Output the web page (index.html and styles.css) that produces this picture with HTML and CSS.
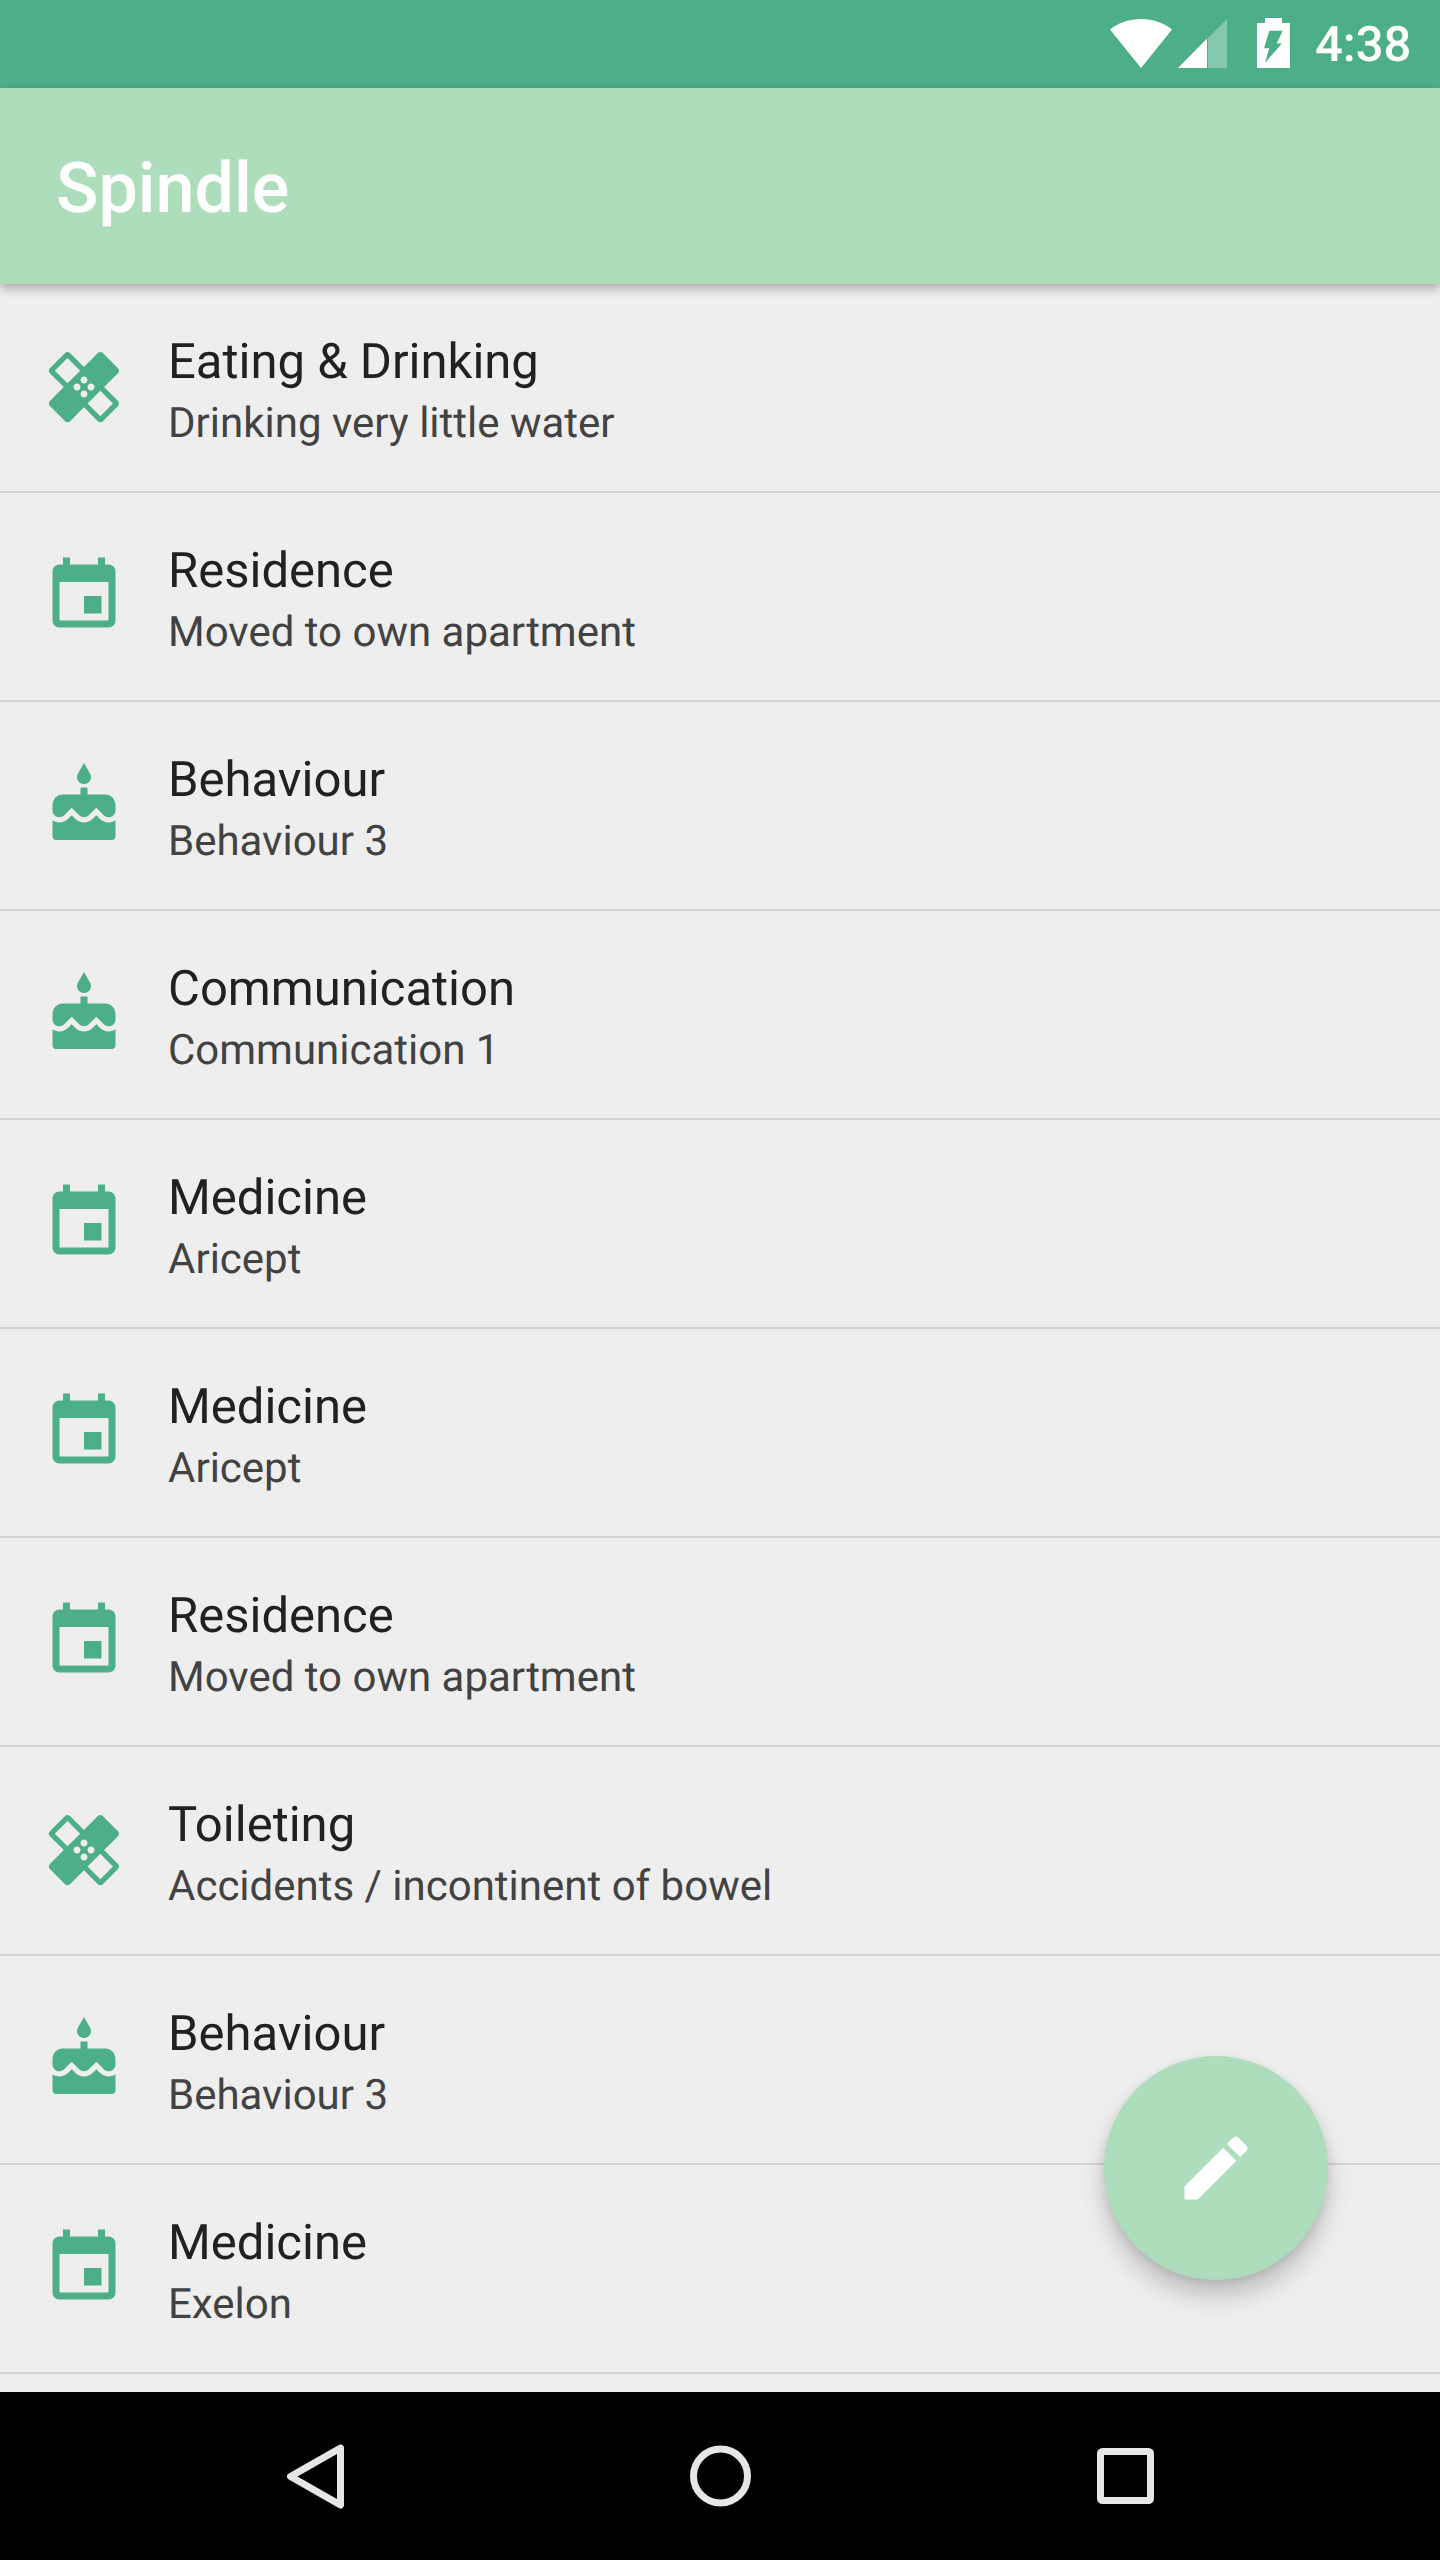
FILE: index.html
```html
<!DOCTYPE html>
<html lang="en">
<head>
<meta charset="utf-8">
<title>Spindle</title>
<link rel="stylesheet" href="styles.css">
</head>
<body>
<svg class="defs" width="0" height="0" aria-hidden="true">
  <symbol id="i-healing" viewBox="0 0 24 24"><path d="M17.73 12.02l3.98-3.98c.39-.39.39-1.02 0-1.41l-4.34-4.34c-.39-.39-1.02-.39-1.41 0l-3.98 3.98L8 2.29C7.8 2.1 7.55 2 7.29 2c-.25 0-.51.1-.7.29L2.25 6.63c-.39.39-.39 1.02 0 1.41l3.98 3.98L2.25 16c-.39.39-.39 1.02 0 1.41l4.34 4.34c.39.39 1.02.39 1.41 0l3.98-3.98 3.98 3.98c.2.2.45.29.71.29.26 0 .51-.1.71-.29l4.34-4.34c.39-.39.39-1.02 0-1.41l-3.99-3.98zM12 9c.55 0 1 .45 1 1s-.45 1-1 1-1-.45-1-1 .45-1 1-1zm-4.71 1.96L3.66 7.34l3.63-3.63 3.62 3.62-3.62 3.63zM10 13c-.55 0-1-.45-1-1s.45-1 1-1 1 .45 1 1-.45 1-1 1zm2 2c-.55 0-1-.45-1-1s.45-1 1-1 1 .45 1 1-.45 1-1 1zm2-4c.55 0 1 .45 1 1s-.45 1-1 1-1-.45-1-1 .45-1 1-1zm2.66 9.34l-3.63-3.62 3.63-3.63 3.62 3.62-3.62 3.63z"/></symbol>
  <symbol id="i-event" viewBox="0 0 24 24"><path d="M17 12h-5v5h5v-5zM16 1v2H8V1H6v2H5c-1.11 0-1.99.9-1.99 2L3 19c0 1.1.89 2 2 2h14c1.1 0 2-.9 2-2V5c0-1.1-.9-2-2-2h-1V1h-2zm3 18H5V8h14v11z"/></symbol>
  <symbol id="i-cake" viewBox="0 0 24 24"><path d="M12 6c1.11 0 2-.9 2-2 0-.38-.1-.73-.29-1.03L12 0l-1.71 2.97c-.19.3-.29.65-.29 1.03 0 1.1.9 2 2 2zm4.6 9.99l-1.07-1.07-1.08 1.07c-1.3 1.3-3.58 1.31-4.89 0l-1.07-1.07-1.09 1.07C6.75 16.64 5.88 17 4.96 17c-.73 0-1.4-.23-1.96-.61V21c0 .55.45 1 1 1h16c.55 0 1-.45 1-1v-4.61c-.56.38-1.23.61-1.96.61-.92 0-1.79-.36-2.44-1.01zM18 9h-5V7h-2v2H6c-1.66 0-3 1.34-3 3v1.54c0 1.08.88 1.96 1.96 1.96.52 0 1.02-.2 1.38-.57l2.14-2.13 2.13 2.13c.74.74 2.03.74 2.77 0l2.14-2.13 2.13 2.13c.37.37.86.57 1.38.57 1.08 0 1.96-.88 1.96-1.96V12C21 10.34 19.66 9 18 9z"/></symbol>
</svg>

<div class="screen">
  <header class="status-bar">
    <svg class="st-wifi" viewBox="0 0 62 49"><path d="M0 10.500C8.500 3.800 19.500 0 31 0s22.500 3.800 31 10.500L31 49z"/></svg>
    <svg class="st-signal" viewBox="0 0 49 49"><path d="M0 49L29 19.500V49z"/><path class="dim" d="M30 19L49 0v49H30z"/></svg>
    <svg class="st-battery" viewBox="0 0 33 50"><path fill-rule="evenodd" d="M8 0h17v5h8v45H0V5h8zM12.300 12.700H25.700L19.700 25.500H25L8 44.700 12.300 30.300H7z"/></svg>
    <span class="st-time">4:38</span>
  </header>

  <div class="app-bar"><h1 class="app-title">Spindle</h1></div>

  <main class="list">
    <div class="row"><svg class="row-icon"><use href="#i-healing"/></svg><div class="row-text"><div class="row-title">Eating &amp; Drinking</div><div class="row-sub">Drinking very little water</div></div></div>
    <div class="row"><svg class="row-icon"><use href="#i-event"/></svg><div class="row-text"><div class="row-title">Residence</div><div class="row-sub">Moved to own apartment</div></div></div>
    <div class="row"><svg class="row-icon"><use href="#i-cake"/></svg><div class="row-text"><div class="row-title">Behaviour</div><div class="row-sub">Behaviour 3</div></div></div>
    <div class="row"><svg class="row-icon"><use href="#i-cake"/></svg><div class="row-text"><div class="row-title">Communication</div><div class="row-sub">Communication 1</div></div></div>
    <div class="row"><svg class="row-icon"><use href="#i-event"/></svg><div class="row-text"><div class="row-title">Medicine</div><div class="row-sub">Aricept</div></div></div>
    <div class="row"><svg class="row-icon"><use href="#i-event"/></svg><div class="row-text"><div class="row-title">Medicine</div><div class="row-sub">Aricept</div></div></div>
    <div class="row"><svg class="row-icon"><use href="#i-event"/></svg><div class="row-text"><div class="row-title">Residence</div><div class="row-sub">Moved to own apartment</div></div></div>
    <div class="row"><svg class="row-icon"><use href="#i-healing"/></svg><div class="row-text"><div class="row-title">Toileting</div><div class="row-sub">Accidents / incontinent of bowel</div></div></div>
    <div class="row"><svg class="row-icon"><use href="#i-cake"/></svg><div class="row-text"><div class="row-title">Behaviour</div><div class="row-sub">Behaviour 3</div></div></div>
    <div class="row"><svg class="row-icon"><use href="#i-event"/></svg><div class="row-text"><div class="row-title">Medicine</div><div class="row-sub">Exelon</div></div></div>
  </main>

  <button class="fab" aria-label="Edit">
    <svg class="fab-icon" viewBox="0 0 24 24"><path d="M3 17.25V21h3.75L17.81 9.94l-3.75-3.75L3 17.25zM20.71 7.04c.39-.39.39-1.02 0-1.41l-2.34-2.34c-.39-.39-1.02-.39-1.41 0l-1.83 1.83 3.75 3.75 1.83-1.83z"/></svg>
  </button>

  <nav class="nav-bar">
    <svg class="nav-back" viewBox="0 0 58 65"><path d="M54.500 4L4.500 32.500 54.500 61z"/></svg>
    <svg class="nav-home" viewBox="0 0 61 62"><circle cx="30.500" cy="31" r="27"/></svg>
    <svg class="nav-recent" viewBox="0 0 57 56"><rect x="3.500" y="3.500" width="50" height="49" rx="2"/></svg>
  </nav>
</div>
</body>
</html>
```

FILE: styles.css
```css
* { box-sizing: border-box; }

html, body {
  margin: 0;
  padding: 0;
  background: #eeeeee;
}

body {
  font-family: Roboto, "Liberation Sans", sans-serif;
  text-rendering: geometricPrecision;
}

.defs {
  position: absolute;
}

.screen {
  position: relative;
  width: 1440px;
  height: 2560px;
  overflow: hidden;
  display: flex;
  flex-direction: column;
  background: #eeeeee;
}

/* Status bar */
.status-bar {
  flex: 0 0 88px;
  height: 88px;
  background: #4daf88;
  display: flex;
  align-items: flex-start;
  padding-left: 1110px;
  fill: #ffffff;
  color: #ffffff;
}

.st-wifi {
  width: 62px;
  height: 49px;
  margin-top: 19px;
}

.st-signal {
  width: 49px;
  height: 49px;
  margin-top: 19px;
  margin-left: 6px;
}

.st-signal .dim {
  fill: rgba(255, 255, 255, 0.32);
}

.st-battery {
  width: 33px;
  height: 50px;
  margin-top: 18px;
  margin-left: 30px;
}

.st-time {
  margin-left: 25px;
  margin-top: 16px;
  font-size: 49px;
  line-height: 57px;
  font-weight: 500;
}

/* App bar */
.app-bar {
  flex: 0 0 196px;
  height: 196px;
  background: #aeddbb;
  display: flex;
  align-items: center;
  padding-left: 56px;
  padding-top: 6px;
  position: relative;
  z-index: 2;
  box-shadow: 0 4px 10px rgba(0, 0, 0, 0.3);
}

.app-title {
  margin: 0;
  font-size: 70px;
  line-height: 82px;
  font-weight: 500;
  color: #ffffff;
}

/* List */
.list {
  flex: 1 1 auto;
  min-height: 0;
  overflow: hidden;
}

.row {
  height: 209px;
  display: flex;
  align-items: center;
  padding-left: 42px;
  border-bottom: 2px solid #d3d3d3;
}

.row-icon {
  flex: 0 0 84px;
  width: 84px;
  height: 84px;
  margin-bottom: 1px;
  fill: #4daf88;
}

.row-text {
  margin-left: 42px;
  padding-top: 8px;
}

.row-title {
  font-size: 49px;
  line-height: 64px;
  color: #212121;
}

.row-sub {
  font-size: 42px;
  line-height: 59px;
  color: #424242;
}

/* Floating action button */
.fab {
  position: absolute;
  left: 1104px;
  top: 2056px;
  width: 224px;
  height: 224px;
  padding: 0;
  border: 0;
  border-radius: 50%;
  background: #aeddbb;
  display: flex;
  align-items: center;
  justify-content: center;
  box-shadow: 0 16px 24px rgba(0, 0, 0, 0.2), 0 3px 8px rgba(0, 0, 0, 0.08);
}

.fab-icon {
  width: 84px;
  height: 84px;
  fill: #ffffff;
}

/* Navigation bar */
.nav-bar {
  position: relative;
  z-index: 3;
  flex: 0 0 168px;
  height: 168px;
  background: #000000;
  display: flex;
  align-items: flex-start;
  padding-left: 286px;
  fill: none;
  stroke: #e6e6e6;
  stroke-width: 7px;
}

.nav-back {
  width: 58px;
  height: 65px;
  margin-top: 52px;
  stroke-linejoin: round;
}

.nav-home {
  width: 61px;
  height: 62px;
  margin-top: 53px;
  margin-left: 346px;
}

.nav-recent {
  width: 57px;
  height: 56px;
  margin-top: 56px;
  margin-left: 346px;
}
```
